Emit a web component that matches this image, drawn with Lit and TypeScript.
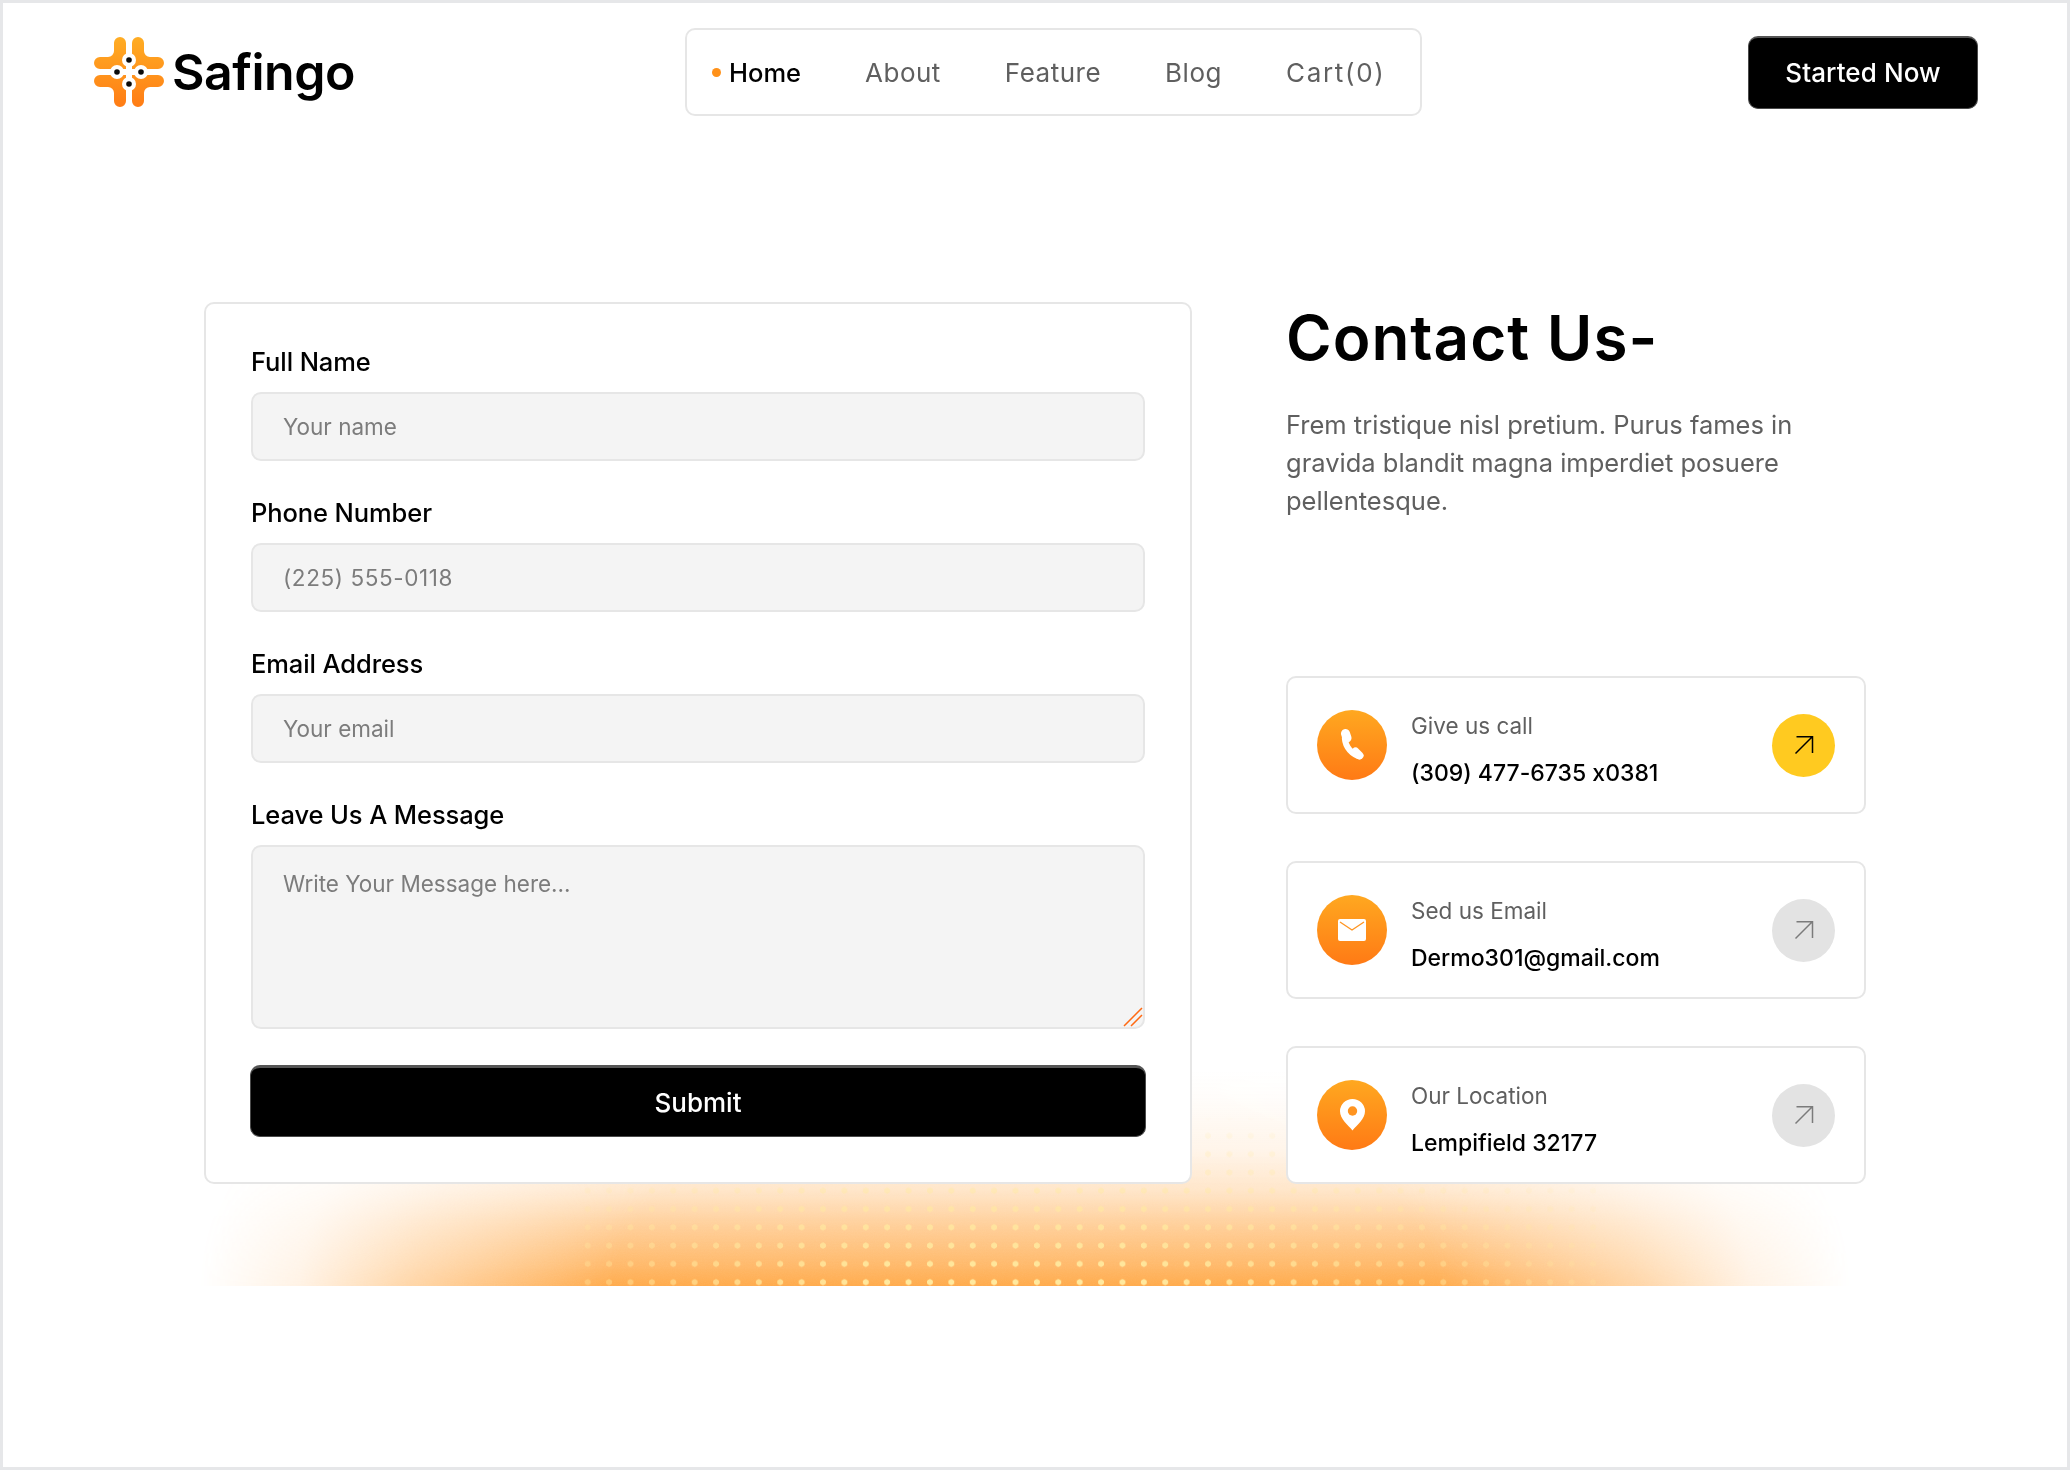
import { LitElement, html, css } from "lit";
import { customElement } from "lit/decorators.js";

const arrow = html`<svg viewBox="0 0 20 20" width="20" height="20" fill="none" stroke="currentColor" stroke-width="1.500"><path d="M1.500 18.500 18 2M2.500 1.700h16V18"/></svg>`;

const logo = html`<svg class="logo" viewBox="0 0 70 70" width="70" height="70">
  <defs><linearGradient id="lg" gradientUnits="userSpaceOnUse" x1="0" y1="0" x2="0" y2="70"><stop offset="0" stop-color="#ffad24"/><stop offset="1" stop-color="#ff7c15"/></linearGradient></defs>
  <g fill="url(#lg)">
    <path d="M26 0a6 6 0 0 1 6 6V32H6a6 6 0 0 1 0-12h8a6 6 0 0 0 6-6V6a6 6 0 0 1 6-6Z"/>
    <path d="M44 0a6 6 0 0 1 6 6v8a6 6 0 0 0 6 6h8a6 6 0 0 1 0 12H38V6a6 6 0 0 1 6-6Z"/>
    <path d="M6 38H32V64a6 6 0 0 1-12 0v-8a6 6 0 0 0-6-6H6a6 6 0 0 1 0-12Z"/>
    <path d="M38 38H64a6 6 0 0 1 0 12h-8a6 6 0 0 0-6 6v8a6 6 0 0 1-12 0Z"/>
  </g>
  <g fill="#fff"><circle cx="35" cy="23" r="7"/><circle cx="35" cy="47" r="7"/><circle cx="23" cy="35" r="7"/><circle cx="47" cy="35" r="7"/></g>
  <g fill="#0b0b0b"><circle cx="35" cy="23" r="2.800"/><circle cx="35" cy="47" r="2.800"/><circle cx="23" cy="35" r="2.800"/><circle cx="47" cy="35" r="2.800"/></g>
</svg>`;

const phone = html`<svg viewBox="0 0 24 32" width="24" height="32" fill="none" stroke="#fff" stroke-linecap="round"><path stroke-width="6" d="M5 6C4 15 9 23 18 27"/><path stroke-width="9" d="M5.500 4.500 7 9"/><path stroke-width="8" d="M15.500 22.500 19.500 26.500"/></svg>`;
const mail = html`<svg viewBox="0 0 28 22" width="28" height="22"><rect width="28" height="22" rx="2" fill="#fff"/><path d="M2 3l12 8 12-8" fill="none" stroke="#ff9420" stroke-width="1.300"/></svg>`;
const pin = html`<svg viewBox="0 0 25 32" width="25" height="32"><path fill="#fff" d="M12.500 31.500C8 26 0 20 0 12.300a12.500 12.300 0 0 1 25 0c0 7.700-8 13.700-12.500 19.200Z"/><circle cx="12.500" cy="12" r="4.700" fill="#ff9420"/></svg>`;

const fields = [
  { l: "Full Name", p: "Your name", c: "" },
  { l: "Phone Number", p: "(225) 555-0118", c: "tel" },
  { l: "Email Address", p: "Your email", c: "" },
];

const contacts = [
  { icon: phone, label: "Give us call", value: "(309) 477-6735 x0381", active: true },
  { icon: mail, label: "Sed us Email", value: "Dermo301@gmail.com", active: false },
  { icon: pin, label: "Our Location", value: "Lempifield 32177", active: false },
];

@customElement("app-root")
export class AppRoot extends LitElement {
  static styles = css`
    :host {
      display: block;
      position: relative;
      box-sizing: border-box;
      height: 1470px;
      border: 3px solid #e6e7e9;
      background: #fff;
      font-family: Inter, "Liberation Sans", sans-serif;
      font-feature-settings: "calt" 0;
      color: #000;
      overflow: hidden;
    }
    * { box-sizing: border-box; }
    header {
      position: relative;
      display: flex;
      align-items: center;
      justify-content: space-between;
      padding: 25px 89px 0 91px;
    }
    .brand { display: flex; align-items: center; gap: 8px; width: 265px; }
    .logo { flex: none; }
    .brand span { font-size: 50px; font-weight: 600; letter-spacing: -0.500px; }
    nav {
      display: flex;
      align-items: center;
      gap: 64px;
      height: 88px;
      width: 737px;
      padding: 0 0 0 25px;
      border: 2px solid #e6e6e6;
      border-radius: 10px;
      font-size: 26px;
      letter-spacing: 0.500px;
      color: #5f5f5f;
    }
    nav a.home {
      display: flex;
      align-items: center;
      gap: 8px;
      color: #000;
      font-weight: 500;
      font-size: 25.500px;
      letter-spacing: 0;
    }
    nav a.home::before { content: ""; width: 9px; height: 9px; border-radius: 50%; background: #ff9119; }
    nav a.cart { letter-spacing: 1.700px; }
    .cta {
      display: flex;
      align-items: center;
      justify-content: center;
      width: 230px;
      height: 73px;
      background: #000;
      color: #fff;
      font-size: 26px;
      font-weight: 500;
      letter-spacing: 0.100px;
      border-radius: 10px;
      border: 1px solid #4a4a4a;
      border-top: 2px solid #555;
    }
    main {
      position: relative;
      display: grid;
      grid-template-columns: 988px 580px;
      gap: 94px;
      margin: 186px 0 0 201px;
      width: 1662px;
      height: 882px;
    }
    .form {
      background: #fff;
      border: 2px solid #e6e6e6;
      border-radius: 10px;
      padding: 42px 45px 0 45px;
    }
    .field { display: block; margin-bottom: 36px; }
    .field b { display: block; font-size: 25.500px; line-height: 32px; font-weight: 500; margin-bottom: 14px; letter-spacing: -0.100px; }
    input, textarea {
      display: block;
      width: 100%;
      height: 69px;
      padding: 0 30px;
      background: #f4f4f4;
      border: 2px solid #e6e6e6;
      border-radius: 10px;
      font: 400 22.500px Inter, "Liberation Sans", sans-serif;
      font-feature-settings: "calt" 0;
      outline: none;
      resize: none;
    }
    input.tel { letter-spacing: 0.600px; }
    textarea { height: 184px; padding: 22px 30px; line-height: 30px; }
    input::placeholder, textarea::placeholder { color: #7c7c7c; opacity: 1; }
    .msg { position: relative; margin-bottom: 36px; }
    .grip { position: absolute; right: 2px; bottom: 2px; }
    .submit {
      display: block;
      width: calc(100% + 2px);
      height: 72px;
      margin: 0 -1px;
      background: #000;
      color: #fff;
      font: 500 26px Inter, "Liberation Sans", sans-serif;
      border: 1px solid #4a4a4a;
      border-top: 3px solid #555;
      border-radius: 10px;
    }
    .side { display: flex; flex-direction: column; justify-content: space-between; }
    h1 { margin: 0; font-size: 62px; line-height: 72px; font-weight: 600; letter-spacing: 1px; }
    .side p { margin: 32px 0 0; font-size: 25.500px; line-height: 38px; color: #5f5f5f; }
    .cards { display: flex; flex-direction: column; gap: 47px; }
    .card {
      display: flex;
      align-items: center;
      height: 138px;
      padding: 0 29px;
      background: #fff;
      border: 2px solid #e6e6e6;
      border-radius: 10px;
    }
    .ico {
      flex: none;
      display: flex;
      align-items: center;
      justify-content: center;
      width: 70px;
      height: 70px;
      border-radius: 50%;
      background: linear-gradient(#ffa820, #ff7a15);
    }
    .txt { flex: 1; margin-left: 24px; padding-top: 8px; }
    .txt small { display: block; font-size: 22.500px; line-height: 30px; color: #5f5f5f; }
    .txt strong { display: block; margin-top: 17px; font-size: 23px; line-height: 30px; font-weight: 500; }
    .go {
      flex: none;
      display: flex;
      align-items: center;
      justify-content: center;
      width: 63px;
      height: 63px;
      border-radius: 50%;
      background: #e3e3e3;
      color: #7b7b7b;
    }
    .go.on { background: #ffca20; color: #000; }
    .glow {
      position: absolute;
      left: 197px;
      top: 1057px;
      width: 1650px;
      height: 226px;
      overflow: hidden;
    }
    .glow > * { position: absolute; display: block; }
    .glow .g {
      inset: 0;
      background: linear-gradient(to top,
        rgba(255, 170, 75, 1) 0,
        rgba(255, 170, 75, .82) 22px,
        rgba(255, 170, 75, .58) 59px,
        rgba(255, 170, 75, .3) 96px,
        rgba(255, 170, 75, .12) 136px,
        rgba(255, 170, 75, .03) 186px,
        rgba(255, 170, 75, 0) 216px);
      -webkit-mask-image: radial-gradient(ellipse 825px 400px at 50% 100%, #000 50%, rgba(0,0,0,.5) 74%, rgba(0,0,0,.15) 88%, transparent 100%);
      mask-image: radial-gradient(ellipse 825px 400px at 50% 100%, #000 50%, rgba(0,0,0,.5) 74%, rgba(0,0,0,.15) 88%, transparent 100%);
    }
    .glow .n {
      inset: 0;
      width: 100%;
      height: 100%;
      mix-blend-mode: soft-light;
      opacity: .22;
    }
    .glow .d {
      left: 377px;
      top: 0;
      width: 1023px;
      height: 100%;
      background-image: radial-gradient(circle at center, #ffeaa0 0 2.700px, transparent 3.300px);
      background-size: 21.400px 18.300px;
      background-position: 0 -6.550px;
      -webkit-mask-image: linear-gradient(to top, #000 0, rgba(0,0,0,.75) 60px, rgba(0,0,0,.4) 100px, rgba(0,0,0,.18) 150px, transparent 170px), linear-gradient(to right, rgba(0,0,0,.35), #000 30%, #000 55%, rgba(0,0,0,.2));
      mask-image: linear-gradient(to top, #000 0, rgba(0,0,0,.75) 60px, rgba(0,0,0,.4) 100px, rgba(0,0,0,.18) 150px, transparent 170px), linear-gradient(to right, rgba(0,0,0,.35), #000 30%, #000 55%, rgba(0,0,0,.2));
      -webkit-mask-composite: source-in;
      mask-composite: intersect;
    }
  `;

  render() {
    return html`
      <div class="glow">
        <i class="g"></i>
        <svg class="n"><filter id="nz"><feTurbulence type="fractalNoise" baseFrequency="0.9" numOctaves="2" /><feColorMatrix type="saturate" values="0" /></filter><rect width="100%" height="100%" filter="url(#nz)" /></svg>
        <i class="d"></i>
      </div>
      <header>
        <div class="brand">${logo}<span>Safingo</span></div>
        <nav>
          <a class="home">Home</a><a>About</a><a>Feature</a><a>Blog</a><a class="cart">Cart(0)</a>
        </nav>
        <div class="cta">Started Now</div>
      </header>
      <main>
        <form class="form">
          ${fields.map((f) => html`<label class="field"><b>${f.l}</b><input class=${f.c} placeholder=${f.p} /></label>`)}
          <label class="field msg">
            <b>Leave Us A Message</b>
            <textarea placeholder="Write Your Message here..."></textarea>
            <svg class="grip" width="20" height="20" viewBox="0 0 20 20" stroke="#ff6a13" stroke-width="1.500"><path d="M1 19 19 1M8 19 19 8"/></svg>
          </label>
          <button class="submit" type="button">Submit</button>
        </form>
        <section class="side">
          <div>
            <h1>Contact Us-</h1>
            <p>Frem tristique nisl pretium. Purus fames in gravida blandit magna imperdiet posuere pellentesque.</p>
          </div>
          <div class="cards">
            ${contacts.map((c) => html`
              <div class="card">
                <div class="ico">${c.icon}</div>
                <div class="txt"><small>${c.label}</small><strong>${c.value}</strong></div>
                <div class="go ${c.active ? "on" : ""}">${arrow}</div>
              </div>`)}
          </div>
        </section>
      </main>
    `;
  }
}
